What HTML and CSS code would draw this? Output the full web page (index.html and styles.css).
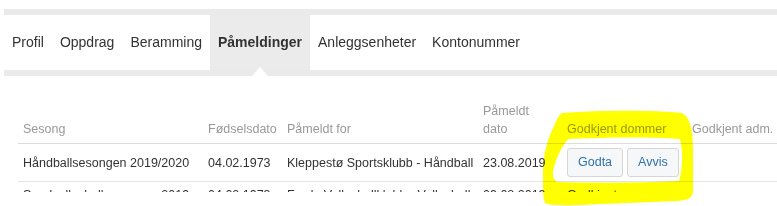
FILE: index.html
```html
<!DOCTYPE html>
<html lang="nb">
<head>
    <meta charset="UTF-8">
    <meta name="viewport" content="width=device-width, initial-scale=1.0">
    <title>Påmeldinger</title>
    <link rel="stylesheet" href="styles.css">
</head>
<body>
    <div class="tabs">
        <ul class="tab-list">
            <li class="tab-item"><a href="#">Profil</a></li>
            <li class="tab-item"><a href="#">Oppdrag</a></li>
            <li class="tab-item"><a href="#">Beramming</a></li>
            <li class="tab-item active"><a href="#">Påmeldinger</a></li>
            <li class="tab-item"><a href="#">Anleggsenheter</a></li>
            <li class="tab-item"><a href="#">Kontonummer</a></li>
        </ul>
    </div>

    <div class="table-wrap">
        <table class="reg-table">
            <colgroup>
                <col style="width: 185px">
                <col style="width: 79px">
                <col style="width: 196px">
                <col style="width: 84px">
                <col style="width: 125px">
                <col>
            </colgroup>
            <thead>
                <tr>
                    <th>Sesong</th>
                    <th>Fødselsdato</th>
                    <th>Påmeldt for</th>
                    <th>Påmeldt<br>dato</th>
                    <th>Godkjent dommer</th>
                    <th>Godkjent adm.</th>
                </tr>
            </thead>
            <tbody>
                <tr>
                    <td>Håndballsesongen 2019/2020</td>
                    <td>04.02.1973</td>
                    <td>Kleppestø Sportsklubb - Håndball</td>
                    <td>23.08.2019</td>
                    <td>
                        <div class="btn-group">
                            <button class="btn">Godta</button>
                            <button class="btn">Avvis</button>
                        </div>
                    </td>
                    <td></td>
                </tr>
                <tr>
                    <td>Sandvolleyballsesongen 2019</td>
                    <td>04.02.1973</td>
                    <td>Førde Volleyballklubb - Volleyball</td>
                    <td>09.08.2019</td>
                    <td>Godkjent</td>
                    <td></td>
                </tr>
            </tbody>
        </table>
    </div>

    <!-- gul markering over kolonnen -->
    <svg class="marker" viewBox="0 0 777 206" xmlns="http://www.w3.org/2000/svg">
        <path fill="#ffff00" fill-rule="evenodd" d="
            M 562 113
            C 600 110, 655 110, 682 113
            C 690 117, 693 130, 693 150
            L 693 192
            C 692 198, 688 200, 678 201
            L 600 204
            C 570 206, 550 206, 545 203
            C 543 198, 543 190, 543 180
            L 543 168
            C 544 152, 548 138, 554 126
            C 557 119, 559 115, 562 113 Z
            M 568 139
            C 610 137, 655 137, 680 139
            C 683 150, 683 168, 679 181
            C 640 183, 595 183, 557 182
            C 552 179, 552 172, 555 164
            C 558 154, 563 145, 568 139 Z" />
    </svg>
</body>
</html>
```

FILE: styles.css
```css
* {
    box-sizing: border-box;
}

body {
    margin: 0;
    position: relative;
    width: 777px;
    height: 206px;
    overflow: hidden;
    background: #ffffff;
    color: #333333;
    font-family: "Liberation Sans", Arial, sans-serif;
}

.tabs {
    margin: 9px 0 0 4px;
    border-top: 6px solid #eaeaea;
    border-bottom: 6px solid #eaeaea;
}

.tab-list {
    display: flex;
    margin: 0;
    padding: 0;
    list-style: none;
}

.tab-item {
    position: relative;
}

.tab-item a {
    display: block;
    padding: 17px 8px;
    font-size: 14px;
    line-height: 21px;
    color: #333333;
    text-decoration: none;
}

.tab-item.active {
    background: #ebebeb;
}

.tab-item.active a {
    font-weight: bold;
}

/* liten pil under aktiv fane */
.tab-item.active::after {
    content: "";
    position: absolute;
    left: 50%;
    bottom: -6px;
    margin-left: -8px;
    border-left: 8px solid transparent;
    border-right: 8px solid transparent;
    border-bottom: 9px solid #ffffff;
}

.table-wrap {
    margin: 22px 0 0 18px;
    height: 94px;
    overflow: hidden;
}

.reg-table {
    width: 759px;
    border-collapse: collapse;
    table-layout: fixed;
    font-size: 12.5px;
    line-height: 18px;
}

.reg-table th {
    padding: 4px 5px 5px;
    text-align: left;
    vertical-align: bottom;
    font-weight: normal;
    color: #999999;
    white-space: nowrap;
    border-bottom: 1px solid #dddddd;
}

.reg-table td {
    padding: 4px 5px;
    vertical-align: middle;
    white-space: nowrap;
    border-bottom: 1px solid #e3e3e3;
}

.btn-group {
    display: flex;
    gap: 4px;
}

.btn {
    padding: 5px 10px;
    font-family: inherit;
    font-size: 12.5px;
    line-height: 17px;
    color: #2f72ad;
    background: #f6f7f8;
    border: 1px solid #d6d6d6;
    border-radius: 3px;
    cursor: pointer;
}

.marker {
    position: absolute;
    top: 0;
    left: 0;
    width: 777px;
    height: 206px;
    pointer-events: none;
    mix-blend-mode: multiply;
}
```
